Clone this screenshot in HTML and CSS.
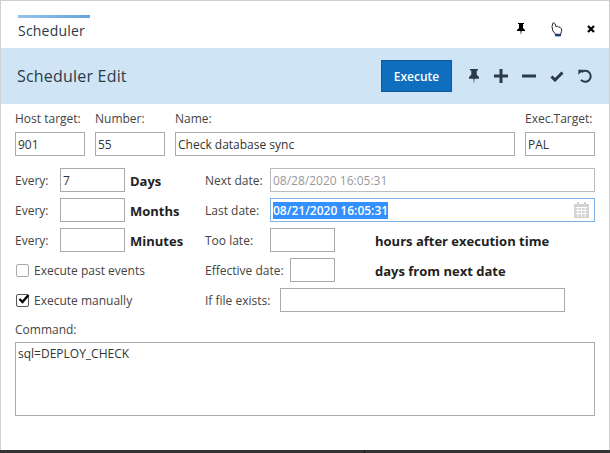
FILE: index.html
```html
<!DOCTYPE html>
<html>
<head>
	<title>Scheduler</title>
	<link rel="stylesheet" href="styles.css">
</head>
<body>
	<div class="window">
		<div class="tabbar">
			<div class="tab">Scheduler</div>
			<div class="win-icons">
				<svg class="win-pin" width="10" height="12" viewBox="0 0 10 12"><path d="M2 0h6v1H7v4l2 2v1H5.600L5 12l-.6-4H1V7l2-2V1H2z" fill="#000"/></svg>
				<svg class="win-hand" width="12" height="15" viewBox="0 0 12 15"><path d="M1.800 1.200c.8-.8 1.800-.2 2.100.6l1.200 3 1.300-.6 1.200.8 1.300.2 1.500 1.500.2 2.700-.9 2.400v1.400H4.300v-1.400L1.800 8.800 1 4.500z" fill="#fff" stroke="#222" stroke-width="1"/><path d="M4.300 11.800h5.400v2.600H4.300z" fill="#1c3f78"/></svg>
				<svg class="win-close" width="8" height="8" viewBox="0 0 8 8"><path d="M1 1l6 6M7 1L1 7" stroke="#000" stroke-width="2.200"/></svg>
			</div>
		</div>

		<div class="header">
			<div class="title">Scheduler Edit</div>
			<button class="execute">Execute</button>
			<div class="tools">
				<svg width="12" height="15" viewBox="0 0 12 15"><path d="M2 0h8v1.500H8.700v4.200L11 8v1.800H6.600L6 15l-.6-5.200H1V8l2.300-2.300V1.500H2z" fill="#2b3a48"/></svg>
				<svg width="14" height="14" viewBox="0 0 14 14"><path d="M5.500 0h3v5.500H14v3H8.500V14h-3V8.500H0v-3h5.500z" fill="#2b3a48"/></svg>
				<svg width="14" height="4" viewBox="0 0 14 4"><rect y=".5" width="14" height="3" rx=".5" fill="#2b3a48"/></svg>
				<svg width="14" height="11" viewBox="0 0 14 11"><path d="M1.500 5.500L5 9l7.500-7.500" fill="none" stroke="#2b3a48" stroke-width="3"/></svg>
				<svg width="14" height="14" viewBox="0 0 14 14"><path d="M3.500 3.200A5.500 5.500 0 1 1 3 10.800" fill="none" stroke="#2b3a48" stroke-width="2"/><path d="M.4.800h5.200L.4 5.800z" fill="#2b3a48"/></svg>
			</div>
		</div>

		<div class="form">
			<div class="top-row">
				<label class="field w-small">Host target:<input class="input" value="901"></label>
				<label class="field w-small">Number:<input class="input" value="55"></label>
				<label class="field w-name">Name:<input class="input" value="Check database sync"></label>
				<label class="field w-small">Exec.Target:<input class="input" value="PAL"></label>
			</div>

			<div class="row">
				<div class="left">
					<span class="lbl every">Every:</span>
					<input class="input w-every" value="7">
					<b class="unit">Days</b>
				</div>
				<div class="right">
					<span class="lbl date-lbl">Next date:</span>
					<input class="input grow disabled" value="08/28/2020 16:05:31">
				</div>
			</div>

			<div class="row">
				<div class="left">
					<span class="lbl every">Every:</span>
					<input class="input w-every">
					<b class="unit">Months</b>
				</div>
				<div class="right">
					<span class="lbl date-lbl">Last date:</span>
					<div class="input grow date-focus">
						<span class="selected">08/21/2020 16:05:31</span>
						<svg class="cal" width="15" height="16" viewBox="0 0 15 16"><path d="M3 0h2v2h5V0h2v2h3v14H0V2h3z" fill="#d2d2d2"/><path d="M1.500 5.500h12M1.500 8.500h12M1.500 11.500h12M4 5v10M7.500 5v10M11 5v10" stroke="#fff" stroke-width="1"/></svg>
					</div>
				</div>
			</div>

			<div class="row">
				<div class="left">
					<span class="lbl every">Every:</span>
					<input class="input w-every">
					<b class="unit">Minutes</b>
				</div>
				<div class="right">
					<span class="lbl date-lbl">Too late:</span>
					<input class="input w-late">
					<b class="note">hours after execution time</b>
				</div>
			</div>

			<div class="row">
				<div class="left">
					<span class="check"></span>
					<span class="lbl">Execute past events</span>
				</div>
				<div class="right">
					<span class="lbl eff-lbl">Effective date:</span>
					<input class="input w-eff">
					<b class="note">days from next date</b>
				</div>
			</div>

			<div class="row">
				<div class="left">
					<span class="check checked">
						<svg width="12" height="10" viewBox="0 0 12 10"><path d="M1.500 5L4.500 8 10.500 1" fill="none" stroke="#000" stroke-width="2.400"/></svg>
					</span>
					<span class="lbl">Execute manually</span>
				</div>
				<div class="right">
					<span class="lbl file-lbl">If file exists:</span>
					<input class="input w-file">
				</div>
			</div>

			<label class="field command">Command:<textarea class="input area">sql=DEPLOY_CHECK</textarea></label>
		</div>

		<div class="bottom"><div class="bottom-part"></div></div>
	</div>
</body>
</html>
```

FILE: styles.css
```css
* {
	box-sizing: border-box;
}

html, body {
	margin: 0;
	height: 100%;
}

body {
	font-family: "Open Sans", sans-serif;
	font-size: 12px;
	color: #444;
	background: #fff;
	overflow: hidden;
}

.window {
	height: 453px;
	display: flex;
	flex-direction: column;
	border-top: 1px solid #d0d0d0;
	border-left: 1px solid #d0d0d0;
	border-right: 1px solid #d0d0d0;
}

.tabbar {
	height: 47px;
	display: flex;
	justify-content: space-between;
	padding: 14px 0 0 17px;
}

.tab {
	width: 72px;
	height: 33px;
	border-top: 3px solid;
	border-image: linear-gradient(to right, #94c2ea, #64a5e0) 1;
	padding-top: 2px;
	font-size: 14px;
	line-height: 22px;
	letter-spacing: .2px;
	color: #2b3a48;
}

.win-icons {
	display: flex;
	align-items: center;
	height: 28px;
}

.win-pin {
	margin-right: 25px;
}

.win-hand {
	margin-right: 24px;
}

.win-close {
	margin-right: 14px;
}

.header {
	height: 56px;
	flex: none;
	display: flex;
	align-items: center;
	background: #cfe5f6;
	padding-left: 16px;
}

.title {
	width: 364px;
	font-size: 16px;
	letter-spacing: .2px;
	color: #2b3a48;
}

.execute {
	width: 71px;
	height: 32px;
	background: #106ebe;
	border: 1px solid #0c5a9c;
	color: #fff;
	font: 600 12px "Open Sans", sans-serif;
	padding: 0;
}

.tools {
	display: flex;
	align-items: center;
	gap: 14px;
	margin-left: 16px;
}

.form {
	flex: 1;
	padding: 6px 14px 0;
}

.top-row {
	display: flex;
	gap: 10px;
}

.field {
	display: flex;
	flex-direction: column;
	gap: 5px;
	line-height: 17px;
}

.w-small {
	width: 70px;
}

.w-name {
	width: 340px;
}

.input {
	height: 24px;
	border: 1px solid #aaa;
	background: #fff;
	padding: 0 2px;
	font: 12px "Open Sans", sans-serif;
	color: #333;
	outline: none;
	border-radius: 0;
}

.top-row .input {
	width: 100%;
}

.row {
	display: flex;
	height: 24px;
	margin-top: 6px;
}

.top-row + .row {
	margin-top: 12px;
}

.left {
	width: 190px;
	display: flex;
	align-items: center;
}

.right {
	flex: 1;
	display: flex;
	align-items: center;
}

.every {
	width: 45px;
}

.w-every {
	width: 65px;
}

.unit {
	margin: 2px 0 0 5px;
	font-size: 13px;
	font-weight: 700;
	color: #222;
}

.date-lbl {
	width: 65px;
}

.eff-lbl {
	width: 85px;
}

.file-lbl {
	width: 75px;
}

.grow {
	width: 325px;
}

.disabled {
	color: #999;
	border-color: #bbb;
}

.date-focus {
	display: flex;
	align-items: center;
	justify-content: space-between;
	border-color: #7fb1e3;
	padding-right: 5px;
}

.selected {
	background: #3390ff;
	color: #fff;
	font-weight: 600;
	font-size: 12px;
	line-height: 17px;
}

.w-late {
	width: 65px;
}

.w-eff {
	width: 45px;
}

.w-file {
	width: 285px;
}

.note {
	margin: 1px 0 0 40px;
	font-size: 13px;
	font-weight: 700;
	color: #222;
}

.check {
	flex: none;
	width: 13px;
	height: 13px;
	margin: 0 5px 0 1px;
	border: 1px solid #aaa;
	border-radius: 2px;
	display: flex;
	align-items: center;
	justify-content: center;
}

.checked {
	border-color: #555;
}

.check svg {
	flex: none;
	margin: -3px -2px 0 0;
}

.command {
	margin-top: 9px;
	gap: 4px;
}

.area {
	width: 580px;
	height: 74px;
	resize: none;
	padding-top: 2px;
	line-height: 17px;
}

.bottom {
	height: 3px;
	flex: none;
	margin: 0 -1px;
	background: #333;
}

.bottom-part {
	width: 365px;
	height: 3px;
	border-right: 1px solid #1c1c1c;
}
```
